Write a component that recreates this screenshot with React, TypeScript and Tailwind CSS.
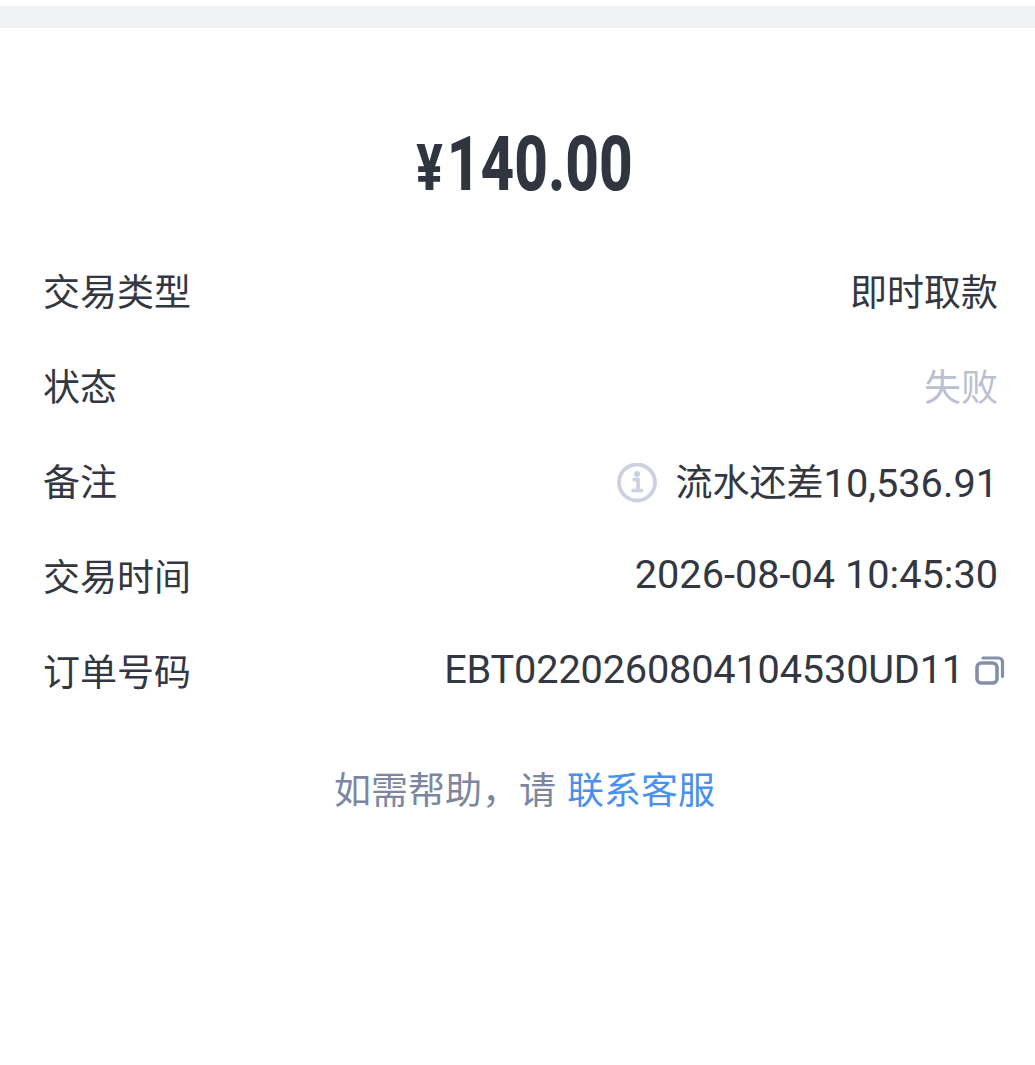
const rows = [
  { label: '交易类型', value: '即时取款' },
  { label: '状态', value: '失败', muted: true },
  { label: '备注', value: '流水还差', num: '10,536.91', info: true },
  { label: '交易时间', num: '2026-08-04 10:45:30', raised: true },
  { label: '订单号码', num: 'EBT0220260804104530UD11', copy: true, raised: true },
];

function InfoIcon() {
  return (
    <svg width="42" height="42" viewBox="0 0 42 42" fill="none" className="mr-[18px] shrink-0">
      <circle cx="21" cy="19.5" r="18" stroke="#ccd0df" strokeWidth="3.8" />
      <circle cx="21" cy="11" r="3" fill="#ccd0df" />
      <path d="M16.500 16.500h5.500v10.500M15.500 27.500h11.500" stroke="#ccd0df" strokeWidth="3.6" />
    </svg>
  );
}

function CopyIcon() {
  return (
    <svg width="30" height="30" viewBox="0 0 30 30" fill="none" className="ml-[11px] mr-[-7px] shrink-0">
      <rect x="2" y="8" width="20" height="20" rx="4.5" stroke="#8490a8" strokeWidth="3.6" />
      <path d="M8 3h15.500a4 4 0 0 1 4 4v14.500" stroke="#8490a8" strokeWidth="3.200" strokeLinecap="round" />
    </svg>
  );
}

export default function App() {
  return (
    <div className="min-h-[1065px] bg-white pt-[6px] text-[#333741] font-['Roboto','Noto_Sans_CJK_SC',sans-serif]">
      <div className="h-[22px] bg-[#f1f2f4]" />
      <div className="flex h-[218px] items-start justify-center pl-[14px] pt-[96px]">
        <div className="flex scale-x-[0.77] items-baseline font-extrabold text-[#303540]">
          <span className="mr-[5px] text-[64px] leading-[80px]">¥</span>
          <span className="text-[76px] leading-[80px]">140.00</span>
        </div>
      </div>
      <div className="flex flex-col pl-[43px] pr-[37px]">
        {rows.map((row) => (
          <div key={row.label} className="flex h-[95px] items-center justify-between text-[37px] leading-[50px]">
            <span>{row.label}</span>
            <span className={`flex items-center ${row.muted ? 'text-[#bcc0d0]' : ''} ${row.raised ? 'pb-[7px]' : ''}`}>
              {row.info && <InfoIcon />}
              {row.value}
              {row.num && <span className={`text-[39.700px] ${row.copy ? 'tracking-[-0.17px]' : ''}`}>{row.num}</span>}
              {row.copy && <CopyIcon />}
            </span>
          </div>
        ))}
      </div>
      <p className="mt-[46px] pl-[14px] text-center text-[37px] leading-[50px] text-[#7c879f]">
        如需帮助，请 <span className="ml-[2px] text-[#4a90ee]">联系客服</span>
      </p>
    </div>
  );
}
